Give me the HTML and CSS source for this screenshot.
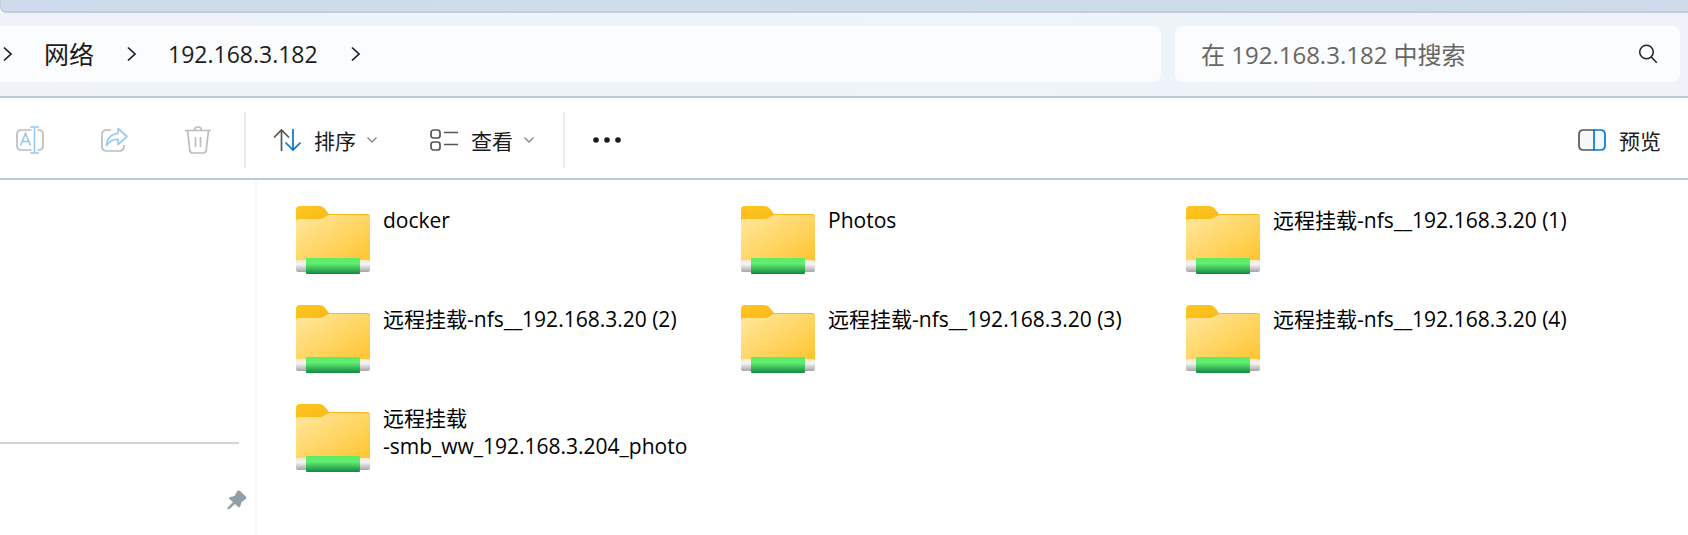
FILE: index.html
```html
<!DOCTYPE html>
<html lang="zh-CN">
<head>
<meta charset="utf-8">
<title>192.168.3.182</title>
<link rel="stylesheet" href="styles.css">
</head>
<body>
<svg class="defs" aria-hidden="true">
  <defs>
    <linearGradient id="tab" x1="0" y1="0" x2="1" y2="1"><stop offset="0" stop-color="#ffc61e"/><stop offset="1" stop-color="#f2a916"/></linearGradient>
    <linearGradient id="front" x1="0" y1="0" x2="1" y2="1"><stop offset="0" stop-color="#ffe8a0"/><stop offset="1" stop-color="#ffc42d"/></linearGradient>
    <linearGradient id="pipe" x1="0" y1="0" x2="0" y2="1"><stop offset="0" stop-color="#f3e8d4"/><stop offset=".35" stop-color="#f5f5f5"/><stop offset="1" stop-color="#a5a5a5"/></linearGradient>
    <linearGradient id="joint" x1="0" y1="0" x2="0" y2="1"><stop offset="0" stop-color="#5cec68"/><stop offset=".35" stop-color="#62ee70"/><stop offset="1" stop-color="#148744"/></linearGradient>
    <symbol id="folder" viewBox="0 0 74 68">
      <path fill="url(#tab)" d="M0 4Q0 0 4 0H23Q27 0 29 3L33 8H71Q74 8 74 11V30H0Z"/>
      <path fill="url(#front)" d="M0 16Q0 13 3 13H24Q27 13 29 11L31 10Q32 9 34 9H71Q74 9 74 12V57H0Z"/>
      <rect fill="url(#pipe)" y="54" width="74" height="12" rx="2"/>
      <rect fill="url(#joint)" x="10" y="52" width="54" height="16" rx="1"/>
    </symbol>
    <symbol id="next" viewBox="0 0 14 16"><path d="M4 1.500l7 6.500-7 6.500" fill="none" stroke="#1b1b1b" stroke-width="1.700"/></symbol>
    <symbol id="down" viewBox="0 0 12 8"><path d="M1.500 1.500L6 6l4.500-4.500" fill="none" stroke="#858585" stroke-width="1.300"/></symbol>
  </defs>
</svg>

<div class="titlebar"></div>
<header class="navbar">
  <nav class="address" aria-label="地址">
    <svg class="next"><use href="#next"/></svg>
    <a class="crumb" href="#">网络</a>
    <svg class="next"><use href="#next"/></svg>
    <a class="crumb latin" href="#">192.168.3.182</a>
    <svg class="next"><use href="#next"/></svg>
  </nav>
  <form class="search">
    <input class="search-input" type="text" aria-label="搜索" placeholder="在 192.168.3.182 中搜索">
    <button class="search-button" type="button" aria-label="搜索">
      <svg class="magnifier" viewBox="0 0 20 20" fill="none" stroke="#222" stroke-width="1.500"><circle cx="8.500" cy="8" r="6.800"/><path d="M13.300 13l5.500 5.700"/></svg>
    </button>
  </form>
</header>

<div class="toolbar">
  <div class="edit">
    <button class="tool" aria-label="重命名" disabled>
      <svg class="icon" viewBox="0 0 28 28" fill="none" stroke-width="1.700">
        <path d="M15.500 4H5.500Q1 4 1 8.500v11Q1 24 5.500 24h10M21.500 4h1Q27 4 27 8.500v11Q27 24 22.500 24h-1" stroke="#bdbdbd"/>
        <path d="M14 1h9M14 27h9M18.500 1v26M4.500 19.500l5-12 5 12M6.200 15.500h6.600" stroke="#9accf3"/>
      </svg>
    </button>
    <button class="tool" aria-label="共享" disabled>
      <svg class="icon" viewBox="0 0 28 28" fill="none" stroke-width="1.700" stroke-linejoin="round">
        <path d="M11 4H7Q2 4 2 9v11.500Q2 25 7 25h12q5 0 5-5v-1" stroke="#bdbdbd"/>
        <path d="M18 2.500l9 8-9 8v-5Q11 13 6.500 19.500 7.500 8 18 7.500Z" stroke="#9accf3"/>
      </svg>
    </button>
    <button class="tool" aria-label="删除" disabled>
      <svg class="icon" viewBox="0 0 28 28" fill="none" stroke="#bdbdbd" stroke-width="1.700">
        <path d="M1 4.500h26M10.500 4.500Q10.500 1 14 1t3.500 3.500M3.500 4.500l2.300 19.700Q6.100 27 8.700 27h10.600q2.600 0 2.900-2.800L24.500 4.500M11.500 11v10M16.500 11v10"/>
      </svg>
    </button>
  </div>
  <div class="arrange">
    <button class="tool">
      <svg class="icon" viewBox="0 0 28 28" fill="none" stroke-width="1.700">
        <path d="M8.500 25V4M1 11.500L8.500 4l7.500 7.500" stroke="#555"/>
        <path d="M20 3v21M12.500 16.500L20 24l7.500-7.500" stroke="#0078d4"/>
      </svg>
      <span class="label">排序</span>
      <svg class="down"><use href="#down"/></svg>
    </button>
    <button class="tool">
      <svg class="icon" viewBox="0 0 28 28" fill="none" stroke="#555" stroke-width="1.700">
        <rect x="1" y="4" width="9" height="8" rx="2.500"/><rect x="1" y="16" width="9" height="8" rx="2.500"/><path d="M14 6.500h14M14 18.500h14"/>
      </svg>
      <span class="label">查看</span>
      <svg class="down"><use href="#down"/></svg>
    </button>
  </div>
  <button class="tool more" aria-label="查看更多">
    <svg class="icon" viewBox="0 0 28 28" fill="#1b1b1b"><circle cx="3" cy="14" r="2.800"/><circle cx="14" cy="14" r="2.800"/><circle cx="25" cy="14" r="2.800"/></svg>
  </button>
  <button class="tool preview">
    <svg class="icon" viewBox="0 0 28 28" stroke-width="1.700">
      <path d="M16 4H5.500Q1 4 1 8.500v11Q1 24 5.500 24H16" fill="#f7f7f7" stroke="#555"/>
      <path d="M16 4h6.500Q27 4 27 8.500v11q0 4.500-4.500 4.500H16Z" fill="#f3faff" stroke="#0078d4"/>
    </svg>
    <span class="label">预览</span>
  </button>
</div>

<div class="body">
  <aside class="sidebar">
    <hr class="rule">
    <svg class="pin" viewBox="0 0 20 20" fill="#939fa7"><path d="M10.500.700Q12 0 13 1l6 5.800q1 1.200-.3 2.200l-4.200 3.200-1.300 4.300q-.8 1.300-2 .4L8 14l-5.800 5.300H.500v-1.500L6 12 2.300 9q-.8-1.300.5-1.800L7.500 6Z"/></svg>
  </aside>
  <main class="files">
    <a class="file" href="#"><svg class="folder"><use href="#folder"/></svg><span class="name">docker</span></a>
    <a class="file" href="#"><svg class="folder"><use href="#folder"/></svg><span class="name">Photos</span></a>
    <a class="file" href="#"><svg class="folder"><use href="#folder"/></svg><span class="name">远程挂载-nfs__192.168.3.20 (1)</span></a>
    <a class="file" href="#"><svg class="folder"><use href="#folder"/></svg><span class="name">远程挂载-nfs__192.168.3.20 (2)</span></a>
    <a class="file" href="#"><svg class="folder"><use href="#folder"/></svg><span class="name">远程挂载-nfs__192.168.3.20 (3)</span></a>
    <a class="file" href="#"><svg class="folder"><use href="#folder"/></svg><span class="name">远程挂载-nfs__192.168.3.20 (4)</span></a>
    <a class="file" href="#"><svg class="folder"><use href="#folder"/></svg><span class="name">远程挂载<br>-smb_ww_192.168.3.204_photo</span></a>
  </main>
</div>
</body>
</html>
```
FILE: styles.css
```css
* { box-sizing: border-box; }

body {
  margin: 0;
  min-height: 100vh;
  display: flex;
  flex-direction: column;
  background: #fff;
  color: #1b1b1b;
  font-family: "Open Sans", "Noto Sans CJK SC", sans-serif;
  font-size: 21px;
  line-height: 28px;
}

svg { display: block; flex: none; }
a { color: inherit; text-decoration: none; }
button, input { font: inherit; color: inherit; border: 0; padding: 0; background: none; }

.defs { position: absolute; width: 0; height: 0; }

.navbar {
  display: grid;
  grid-template-columns: 1161fr 505fr;
  gap: 14px;
  padding: 13px 8px 14px 0;
  background: linear-gradient(100deg, #eff3f9, #eef4f9 60%, #f0f2f9);
  border-bottom: 2px solid #bdc9d9;
}

.titlebar {
  height: 13px;
  background: linear-gradient(90deg, #cfdbec, #ccdcea 80%, #cfdaeb);
  border-bottom: 2px solid #c2cedf;
  border-left: 1px solid #c2cedf;
  border-bottom-left-radius: 6px;
}

.address, .search {
  display: flex;
  align-items: center;
  height: 56px;
  background: #fbfcfe;
}

.address { gap: 30px; border-radius: 0 8px 8px 0; }
.next { width: 14px; height: 16px; }
.crumb { font-size: 25px; }
.latin { font-size: 23px; }

.search { padding: 0 22px 0 26px; border-radius: 8px; }
.search-input { flex: 1; min-width: 0; height: 56px; font-size: 24px; outline: 0; }
.search-input::placeholder { color: #666; opacity: 1; }
.magnifier { width: 20px; height: 20px; }

.toolbar {
  display: flex;
  align-items: center;
  padding: 14px 27px 10px 16px;
  border-bottom: 2px solid #bdc9d9;
}

.edit, .arrange {
  display: flex;
  align-items: center;
  height: 56px;
  border-right: 2px solid #ebebeb;
}

.edit { gap: 56px; padding-right: 32px; }
.arrange { gap: 52px; padding: 0 28px 0 27px; }
.tool { display: flex; align-items: center; gap: 13px; }
.label { padding-top: 2px; }
.icon { width: 28px; height: 28px; }
.down { width: 12px; height: 8px; margin-left: -3px; }
.more { margin-left: 28px; }
.preview { margin-left: auto; }

.body { flex: 1; display: flex; }

.sidebar {
  flex: none;
  width: 257px;
  padding: 262px 8px 24px 0;
  border-right: 2px solid #f7f7f7;
}

.rule { height: 2px; margin: 0 8px 46px 0; border: 0; background: #d3d3d3; }
.pin { width: 20px; height: 20px; margin-left: auto; }

.files {
  flex: 1;
  display: grid;
  grid-template-columns: repeat(auto-fill, 445px);
  grid-auto-rows: 99px;
  align-content: start;
  padding: 26px 0 0 39px;
  color: #000;
}

.file { display: flex; align-items: flex-start; gap: 13px; }
.folder { width: 74px; height: 68px; }
.name { white-space: nowrap; }
```
